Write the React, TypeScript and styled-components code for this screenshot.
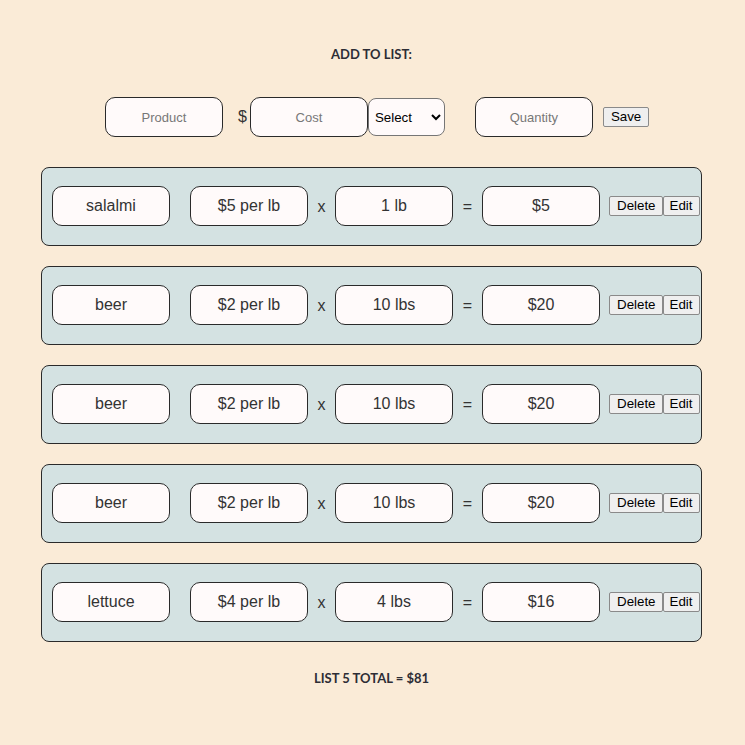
import React from "react";
import styled, { createGlobalStyle } from "styled-components";

const GlobalStyle = createGlobalStyle`
  html, body { margin: 0; padding: 0; background: #faebd7; }
  body { font-family: "Liberation Sans", Arial, sans-serif; }
`;

const Page = styled.div`
  width: 745px;
  min-height: 745px;
  background: #faebd7;
  padding-top: 45px;
  box-sizing: border-box;
`;

const Heading = styled.h2`
  margin: 0;
  text-align: center;
  font-family: Lato, "Open Sans", sans-serif;
  font-weight: 700;
  font-size: 13px;
  line-height: 18px;
  color: #2d2d35;
  padding-right: 2px;
`;

const FormRow = styled.div`
  display: flex;
  align-items: center;
  margin-top: 34px;
  padding-left: 105px;
  height: 40px;
`;

const Field = styled.input`
  box-sizing: border-box;
  width: 118px;
  height: 40px;
  border: 1px solid #2a2a2a;
  border-radius: 10px;
  background: #fffafa;
  text-align: center;
  font-family: "Liberation Sans", Arial, sans-serif;
  font-size: 13px;
  color: #333;
  outline: none;
  &::placeholder { color: #777; }
`;

const Dollar = styled.span`
  font-size: 16px;
  color: #333;
  margin: 0 3px 0 15px;
`;

const Select = styled.select`
  box-sizing: border-box;
  width: 77px;
  height: 38px;
  border: 1px solid #767676;
  border-radius: 8px;
  background: #fffafa;
  font-family: "Liberation Sans", Arial, sans-serif;
  font-size: 13.33px;
  color: #000;
  padding-left: 2px;
`;

const Spacer = styled.div<{ $w: number }>`
  width: ${(p) => p.$w}px;
  flex: none;
`;

const Btn = styled.button`
  box-sizing: border-box;
  height: 20px;
  padding: 0 6px;
  border: 1px solid #8a8a8a;
  border-radius: 2px;
  background: #efefef;
  font-family: "Liberation Sans", Arial, sans-serif;
  font-size: 13.33px;
  color: #000;
  line-height: 18px;
`;

const SaveBtn = styled(Btn)`
  padding: 0 7px;
`;

const List = styled.div`
  display: flex;
  flex-direction: column;
  gap: 20px;
  margin-top: 30px;
  margin-left: 41px;
  width: 661px;
`;

const Card = styled.div`
  box-sizing: border-box;
  height: 79px;
  border: 1px solid #2a2a2a;
  border-radius: 8px;
  background: #d4e2e2;
  display: flex;
  align-items: flex-start;
  padding: 18px 0 0 10px;
`;

const Cell = styled.div`
  box-sizing: border-box;
  width: 118px;
  height: 40px;
  border: 1px solid #2a2a2a;
  border-radius: 10px;
  background: #fffafa;
  display: flex;
  align-items: center;
  justify-content: center;
  padding-bottom: 1px;
  font-size: 16px;
  color: #333;
  flex: none;
`;

const Op = styled.span<{ $w: number }>`
  width: ${(p) => p.$w}px;
  text-align: center;
  font-size: 16px;
  line-height: 18px;
  color: #333;
  flex: none;
  padding-top: 12px;
`;

const Actions = styled.div`
  display: flex;
  margin: 10px 0 0 9px;
`;

const DeleteBtn = styled(Btn)`
  padding: 0 6px 0 7px;
`;

const Total = styled.div`
  margin-top: 27px;
  text-align: center;
  font-family: Lato, "Open Sans", sans-serif;
  font-weight: 700;
  font-size: 13px;
  line-height: 18px;
  color: #2d2d35;
  padding-right: 2px;
`;

const items = [
  { name: "salalmi", cost: "$5 per lb", qty: "1 lb", total: "$5" },
  { name: "beer", cost: "$2 per lb", qty: "10 lbs", total: "$20" },
  { name: "beer", cost: "$2 per lb", qty: "10 lbs", total: "$20" },
  { name: "beer", cost: "$2 per lb", qty: "10 lbs", total: "$20" },
  { name: "lettuce", cost: "$4 per lb", qty: "4 lbs", total: "$16" },
];

export default function App() {
  return (
    <Page>
      <GlobalStyle />
      <Heading>ADD TO LIST:</Heading>
      <FormRow>
        <Field placeholder="Product" />
        <Dollar>$</Dollar>
        <Field placeholder="Cost" />
        <Select defaultValue="">
          <option value="">Select</option>
          <option value="lb">per lb</option>
          <option value="each">each</option>
        </Select>
        <Spacer $w={30} />
        <Field placeholder="Quantity" />
        <Spacer $w={10} />
        <SaveBtn>Save</SaveBtn>
      </FormRow>
      <List>
        {items.map((it, i) => (
          <Card key={i}>
            <Cell>{it.name}</Cell>
            <Spacer $w={20} />
            <Cell>{it.cost}</Cell>
            <Op $w={27}>x</Op>
            <Cell>{it.qty}</Cell>
            <Op $w={29}>=</Op>
            <Cell>{it.total}</Cell>
            <Actions>
              <DeleteBtn>Delete</DeleteBtn>
              <Btn>Edit</Btn>
            </Actions>
          </Card>
        ))}
      </List>
      <Total>LIST 5 TOTAL = $81</Total>
    </Page>
  );
}
